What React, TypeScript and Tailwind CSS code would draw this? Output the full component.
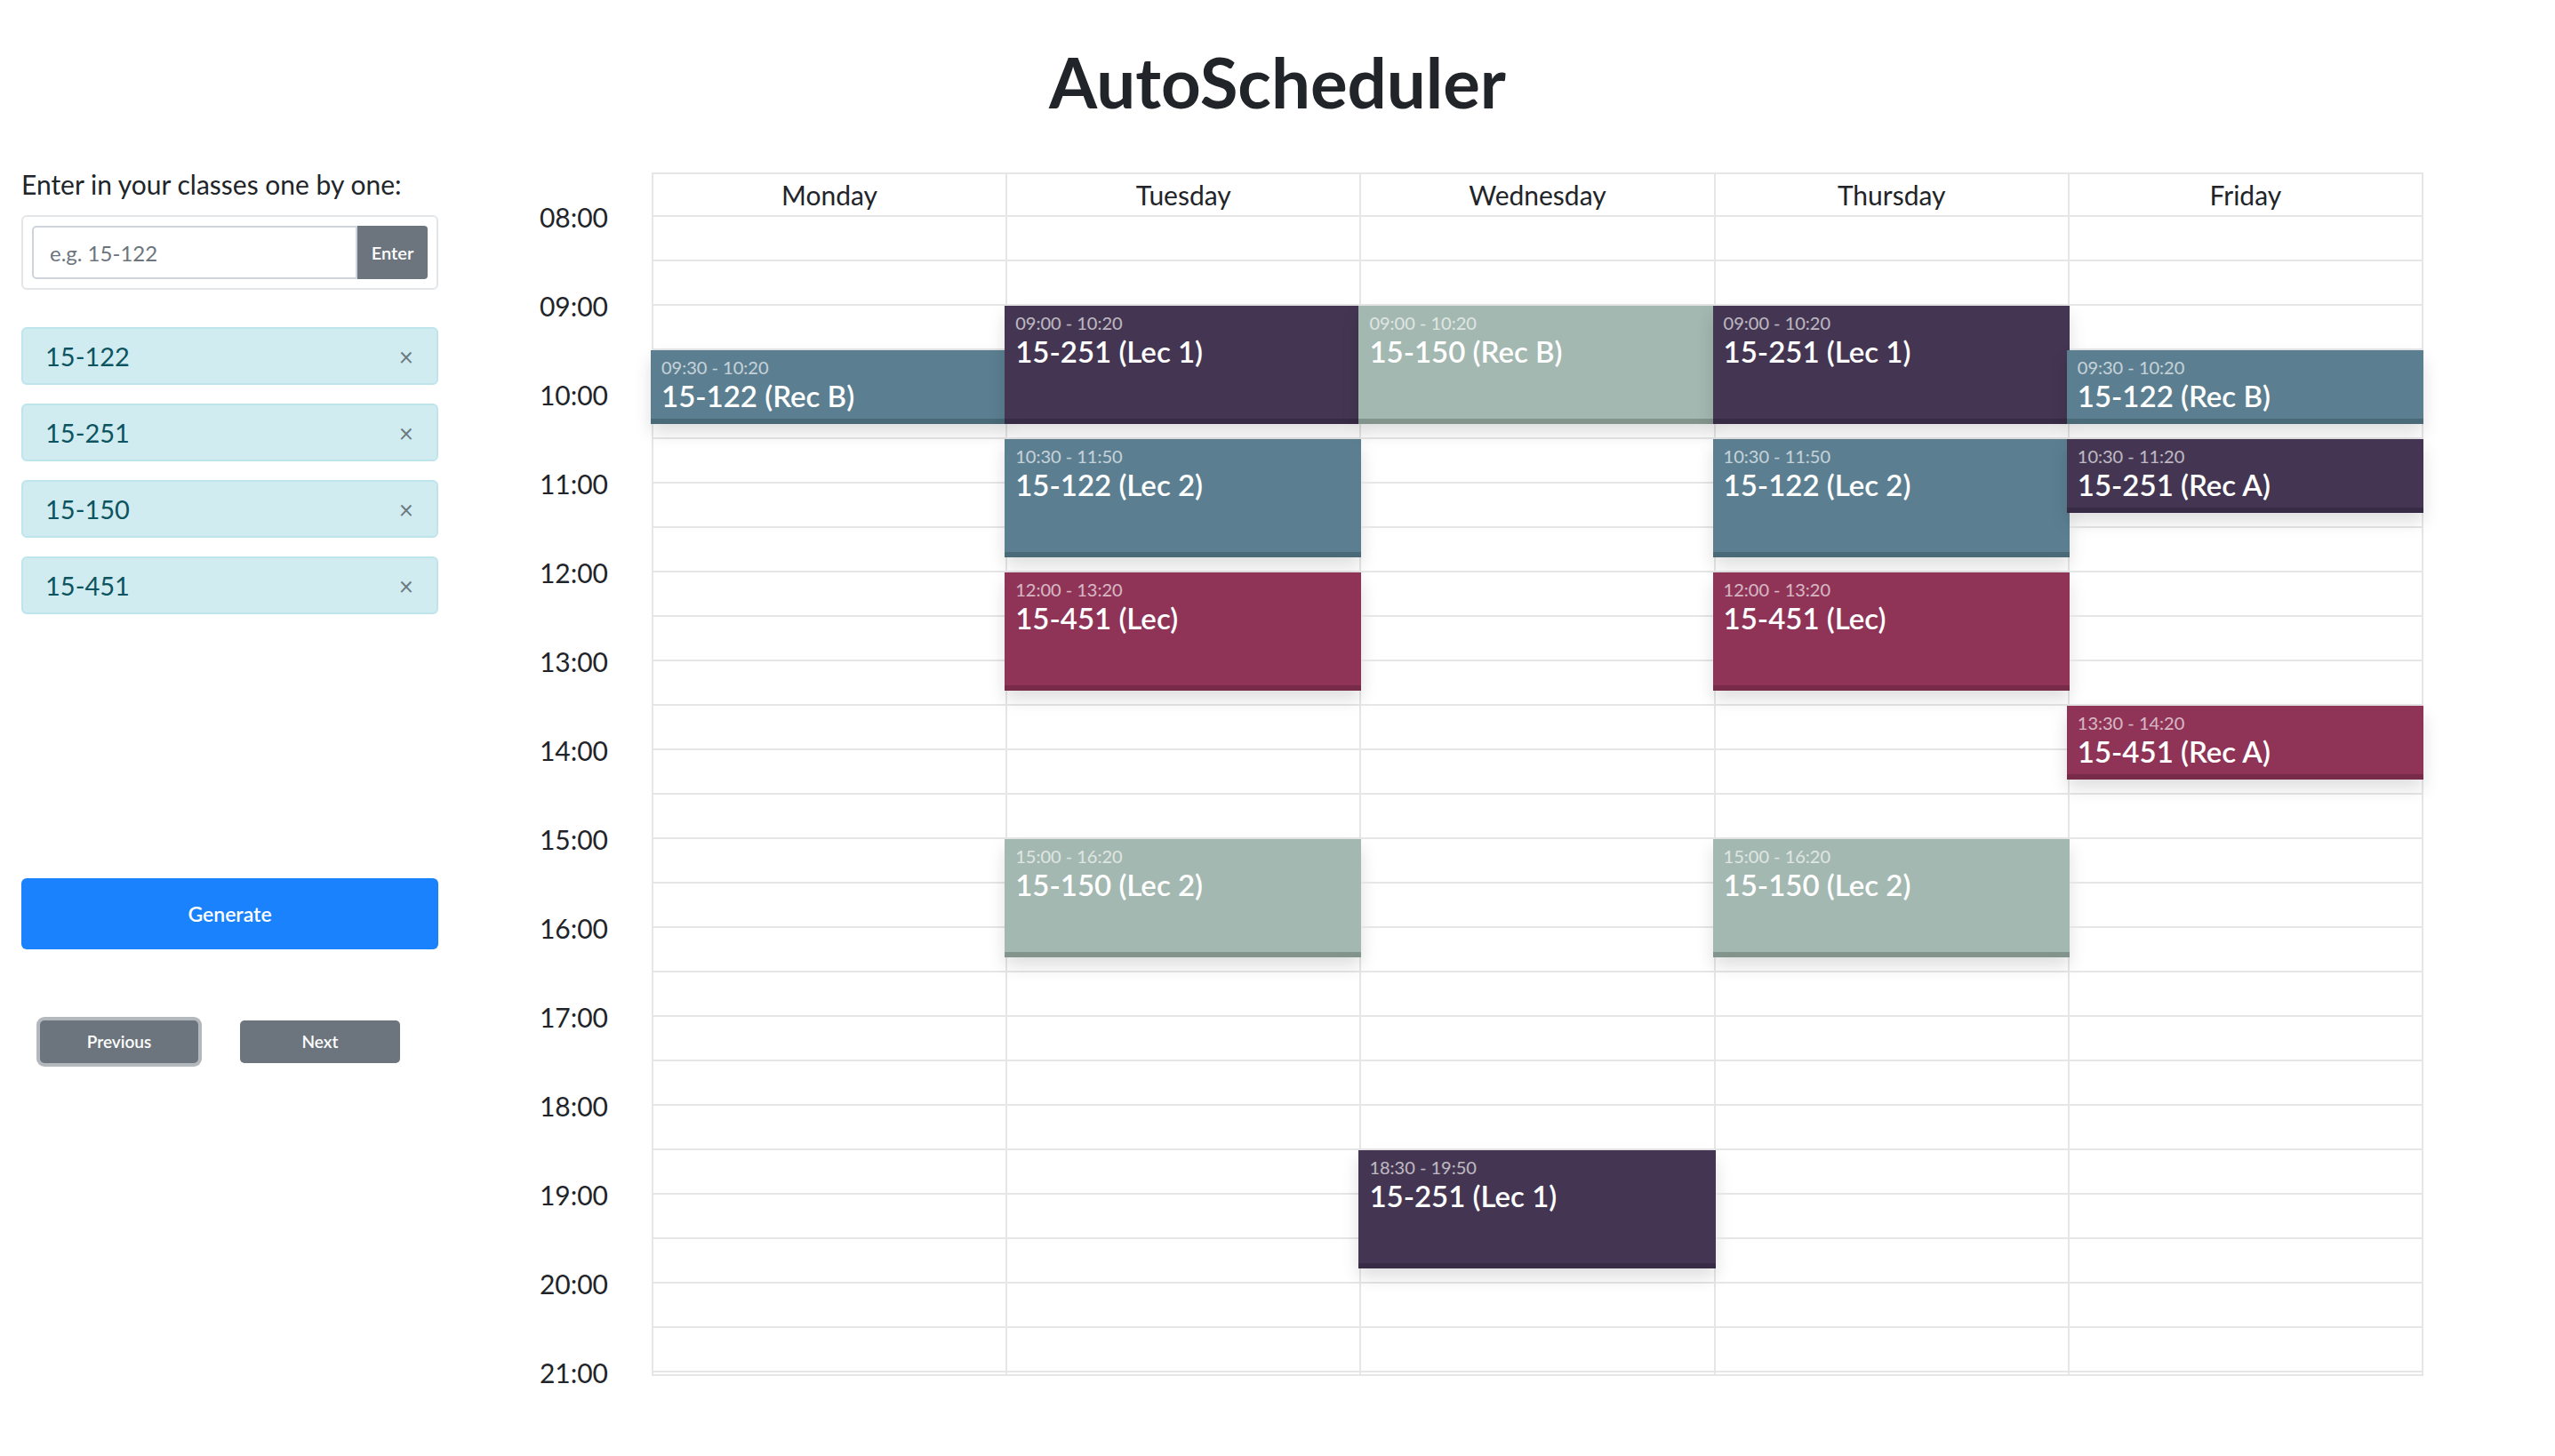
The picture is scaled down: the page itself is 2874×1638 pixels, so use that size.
import React from 'react';

type Ev = { day: number; start: string; end: string; title: string; color: 'blue' | 'purple' | 'sage' | 'crimson' };

const colors = {
  blue: 'bg-[#5b7f91] border-[#4a6a78]',
  purple: 'bg-[#443652] border-[#382b45]',
  sage: 'bg-[#a3b8b0] border-[#83948d]',
  crimson: 'bg-[#8f3457] border-[#772b48]',
};

const days = ['Monday', 'Tuesday', 'Wednesday', 'Thursday', 'Friday'];
const hours = ['08:00', '09:00', '10:00', '11:00', '12:00', '13:00', '14:00', '15:00', '16:00', '17:00', '18:00', '19:00', '20:00', '21:00'];
const classes = ['15-122', '15-251', '15-150', '15-451'];

const events: Ev[] = [
  { day: 0, start: '09:30', end: '10:20', title: '15-122 (Rec B)', color: 'blue' },
  { day: 1, start: '09:00', end: '10:20', title: '15-251 (Lec 1)', color: 'purple' },
  { day: 1, start: '10:30', end: '11:50', title: '15-122 (Lec 2)', color: 'blue' },
  { day: 1, start: '12:00', end: '13:20', title: '15-451 (Lec)', color: 'crimson' },
  { day: 1, start: '15:00', end: '16:20', title: '15-150 (Lec 2)', color: 'sage' },
  { day: 2, start: '09:00', end: '10:20', title: '15-150 (Rec B)', color: 'sage' },
  { day: 2, start: '18:30', end: '19:50', title: '15-251 (Lec 1)', color: 'purple' },
  { day: 3, start: '09:00', end: '10:20', title: '15-251 (Lec 1)', color: 'purple' },
  { day: 3, start: '10:30', end: '11:50', title: '15-122 (Lec 2)', color: 'blue' },
  { day: 3, start: '12:00', end: '13:20', title: '15-451 (Lec)', color: 'crimson' },
  { day: 3, start: '15:00', end: '16:20', title: '15-150 (Lec 2)', color: 'sage' },
  { day: 4, start: '09:30', end: '10:20', title: '15-122 (Rec B)', color: 'blue' },
  { day: 4, start: '10:30', end: '11:20', title: '15-251 (Rec A)', color: 'purple' },
  { day: 4, start: '13:30', end: '14:20', title: '15-451 (Rec A)', color: 'crimson' },
];

// minutes since 08:00
const mins = (t: string) => {
  const [h, m] = t.split(':').map(Number);
  return (h - 8) * 60 + m;
};

const EventBlock: React.FC<{ ev: Ev }> = ({ ev }) => {
  const top = (mins(ev.start) * 100) / 60;
  const height = ((mins(ev.end) - mins(ev.start)) * 100) / 60;
  return (
    <div
      className={`absolute left-0 right-0 border-b-[6px] pl-[12px] pt-[7px] text-white shadow-[0_10px_18px_rgba(0,0,0,0.13)] ${colors[ev.color]}`}
      style={{ top, height }}
    >
      <div className="text-[20px] leading-[24px] text-white/65">{ev.start} - {ev.end}</div>
      <div className="text-[33px] leading-[40px] font-semibold">{ev.title}</div>
    </div>
  );
};

const Sidebar: React.FC = () => (
  <div className="w-[469px] ml-[24px] flex flex-col">
    <label className="text-[30px] leading-[44px] text-[#212529]">Enter in your classes one by one:</label>
    <div className="mt-[13px] border-2 border-[#e3e6e9] rounded-[6px] p-[10px] flex">
      <input
        placeholder="e.g. 15-122"
        className="h-[60px] flex-1 min-w-0 border-2 border-[#ced4da] rounded-l-[5px] px-[18px] text-[24px] text-[#495057] placeholder:text-[#6c757d] outline-none"
      />
      <button className="h-[60px] w-[79px] bg-[#6c757d] text-white text-[20px] font-semibold rounded-r-[4px]">Enter</button>
    </div>
    <div className="mt-[42px] flex flex-col gap-[21px]">
      {classes.map(c => (
        <div key={c} className="h-[65px] bg-[#d1ecf1] border-2 border-[#bee5eb] rounded-[6px] flex items-center justify-between pl-[25px] pr-[26px]">
          <span className="text-[29px] text-[#0c5460]">{c}</span>
          <span className="text-[28px] text-[#6b7b80]">×</span>
        </div>
      ))}
    </div>
    <button className="mt-[297px] h-[80px] bg-[#1982fc] rounded-[6px] text-white text-[23px] font-semibold">Generate</button>
    <div className="mt-[80px] flex gap-[47px] pl-[21px]">
      <button className="h-[48px] w-[178px] bg-[#6c757d] rounded-[5px] text-white text-[19px] font-semibold shadow-[0_0_0_4px_#b3b8bc]">Previous</button>
      <button className="h-[48px] w-[180px] bg-[#6c757d] rounded-[5px] text-white text-[19px] font-semibold">Next</button>
    </div>
  </div>
);

const Calendar: React.FC = () => (
  <div className="flex pt-[9px]">
    <div className="w-[191px] flex flex-col">
      {hours.map(h => (
        <div key={h} className="h-[100px] flex items-center justify-end text-[30px] text-[#212529]">{h}</div>
      ))}
    </div>
    <div className="ml-[49px] w-[1993px] self-start border-t-2 border-l-2 border-[#e6e6e6] grid grid-cols-5">
      {days.map((d, i) => (
        <div key={d} className="relative flex flex-col">
          <div className="h-[48px] border-b-2 border-r-2 border-[#e6e6e6] flex items-center justify-center text-[30px] text-[#212529]">{d}</div>
          {Array.from({ length: 26 }).map((_, k) => (
            <div key={k} className="h-[50px] border-b-2 border-r-2 border-[#e6e6e6]" />
          ))}
          <div className="h-[4px] border-b-2 border-r-2 border-[#e6e6e6]" />
          <div className="absolute top-[48px] left-[-3px] right-0">
            {events.filter(e => e.day === i).map((e, k) => (
              <EventBlock key={k} ev={e} />
            ))}
          </div>
        </div>
      ))}
    </div>
  </div>
);

export default function App() {
  return (
    <div className="min-h-[1638px] bg-white text-[#212529]" style={{ fontFamily: 'Lato, "Noto Sans", sans-serif' }}>
      <h1 className="pt-[45px] text-center text-[78px] leading-[94px] font-bold text-[#212529]">AutoScheduler</h1>
      <div className="mt-[46px] flex">
        <Sidebar />
        <Calendar />
      </div>
    </div>
  );
}
